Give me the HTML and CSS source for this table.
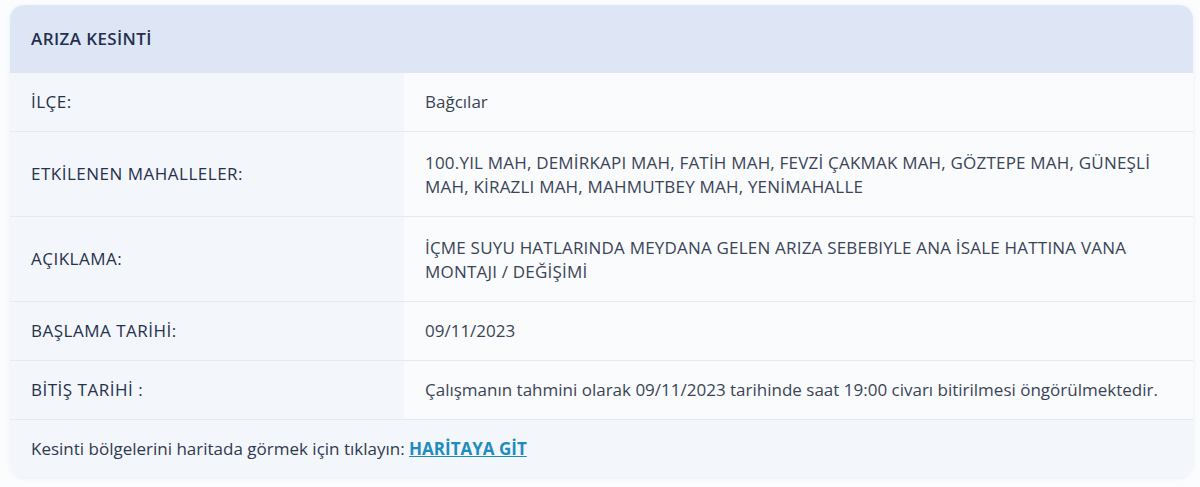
FILE: index.html
```html
<!DOCTYPE html>
<html lang="tr">
<head>
  <meta charset="UTF-8">
  <meta name="viewport" content="width=device-width, initial-scale=1.0">
  <title>Arıza Kesinti</title>
  <link rel="stylesheet" href="styles.css">
</head>
<body>
  <div class="outage-card">
    <div class="outage-header">ARIZA KESİNTİ</div>

    <div class="outage-row">
      <div class="outage-label">İLÇE:</div>
      <div class="outage-value">Bağcılar</div>
    </div>
    <div class="outage-row">
      <div class="outage-label">ETKİLENEN MAHALLELER:</div>
      <div class="outage-value caps">100.YIL MAH, DEMİRKAPI MAH, FATİH MAH, FEVZİ ÇAKMAK MAH, GÖZTEPE MAH, GÜNEŞLİ MAH, KİRAZLI MAH, MAHMUTBEY MAH, YENİMAHALLE</div>
    </div>
    <div class="outage-row">
      <div class="outage-label">AÇIKLAMA:</div>
      <div class="outage-value caps">İÇME SUYU HATLARINDA MEYDANA GELEN ARIZA SEBEBIYLE ANA İSALE HATTINA VANA MONTAJI / DEĞİŞİMİ</div>
    </div>
    <div class="outage-row">
      <div class="outage-label">BAŞLAMA TARİHİ:</div>
      <div class="outage-value">09/11/2023</div>
    </div>
    <div class="outage-row">
      <div class="outage-label">BİTİŞ TARİHİ :</div>
      <div class="outage-value">Çalışmanın tahmini olarak 09/11/2023 tarihinde saat 19:00 civarı bitirilmesi öngörülmektedir.</div>
    </div>

    <div class="outage-footer">
      Kesinti bölgelerini haritada görmek için tıklayın: <a href="#" class="map-link">HARİTAYA GİT</a>
    </div>
  </div>
</body>
</html>
```

FILE: styles.css
```css
body {
  font-family: "Open Sans", "Noto Sans", sans-serif;
  background: #fbfcfe;
  margin: 0;
  padding: 5px 7px 9px 10px;
  color: #2a3550;
  font-size: 17px;
}
.outage-card {
  border-radius: 14px;
  overflow: hidden;
  background: #f9fbfd;
  box-shadow: 0 1px 4px rgba(40, 60, 100, 0.08);
}
.outage-header {
  background: #dee6f5;
  padding: 22px 21px;
  line-height: 24px;
  font-weight: 600;
  letter-spacing: 0.4px;
  color: #24304d;
}
.outage-row {
  display: grid;
  grid-template-columns: 394px 1fr;
  border-bottom: 1px solid #e6eaf0;
}
.outage-label {
  background: #f3f6fb;
  padding: 17px 21px;
  line-height: 24px;
  letter-spacing: 0.5px;
  display: flex;
  align-items: center;
  color: #26314b;
}
.outage-value {
  padding: 17px 26px 17px 21px;
  line-height: 24px;
  color: #3b4456;
}
.outage-value.caps {
  letter-spacing: 0.2px;
  padding-top: 19px;
  padding-bottom: 17px;
}
.outage-footer {
  background: #f3f6fb;
  padding: 17px 21px 16px;
  line-height: 24px;
  color: #2f3a50;
}
.map-link {
  color: #1f8cbf;
  font-weight: 700;
}
```
